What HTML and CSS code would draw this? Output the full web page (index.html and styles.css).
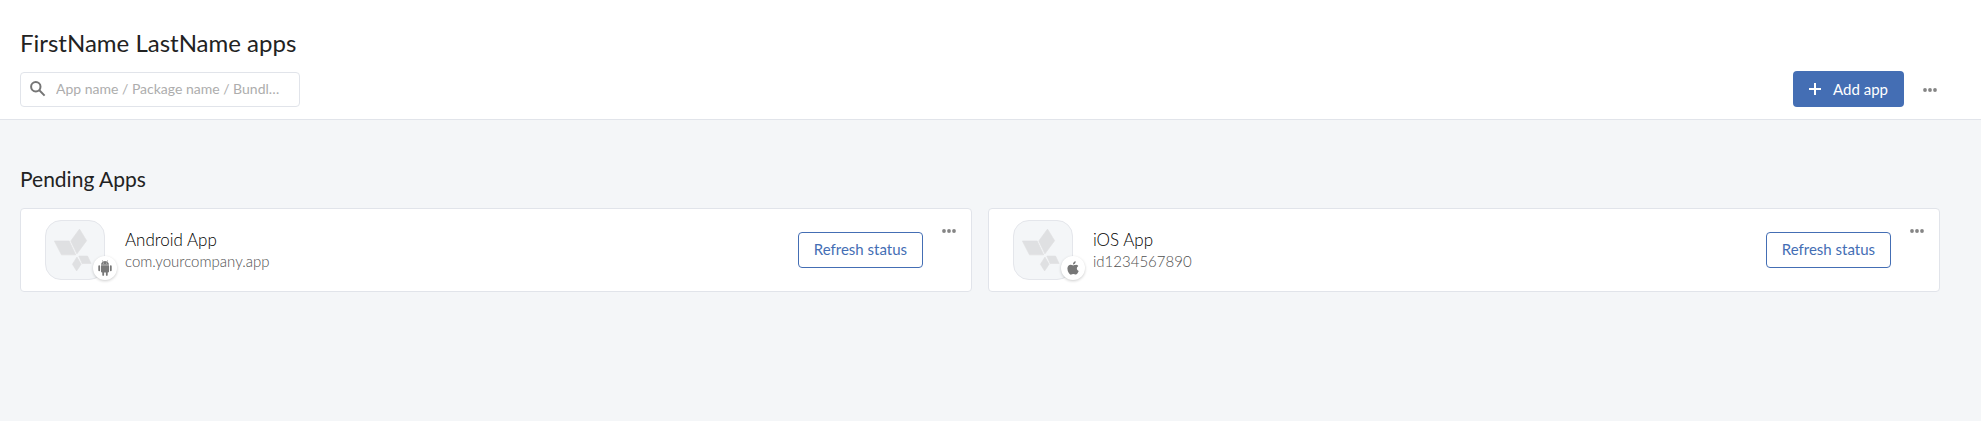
FILE: index.html
```html
<!DOCTYPE html>
<html lang="en">
<head>
<meta charset="utf-8">
<title>Apps</title>
<link rel="stylesheet" href="styles.css">
</head>
<body>
<svg class="sprite" aria-hidden="true">
  <symbol id="dots" viewBox="0 0 14 4"><circle cx="2" cy="2" r="1.9"/><circle cx="7" cy="2" r="1.9"/><circle cx="12" cy="2" r="1.9"/></symbol>
  <symbol id="petals" viewBox="0 0 180 180">
    <path d="M104 25 126 61 96 102 77 62ZM26 62 72 62 92 105 48 105ZM102 109 129 109 140 132 112 132ZM96 112 109 134 95 155 82 134Z"/>
  </symbol>
</svg>
<header class="header">
  <h1 class="title">FirstName LastName apps</h1>
  <div class="toolbar">
    <label class="search">
      <svg class="search-icon" viewBox="0 0 16 16" aria-hidden="true"><circle cx="5.8" cy="5.8" r="4.7"/><path d="M9.3 9.3 14.6 14.6"/></svg>
      <input class="search-input" type="text" aria-label="Search apps" placeholder="App name / Package name / Bundle ID">
    </label>
    <div class="actions">
      <button class="add" type="button">
        <svg class="plus" viewBox="0 0 12 12" aria-hidden="true"><path d="M6 0V12M0 6H12"/></svg>
        Add app
      </button>
      <button class="more" type="button" aria-label="More actions"><svg class="dots"><use href="#dots"/></svg></button>
    </div>
  </div>
</header>
<main class="main">
  <h2 class="section-title">Pending Apps</h2>
  <div class="cards">
    <article class="card">
      <div class="app-icon">
        <svg class="petals" aria-hidden="true"><use href="#petals"/></svg>
        <span class="badge">
          <svg class="android" viewBox="0 0 14 16" aria-hidden="true"><path d="M3 5.3H11V11.6Q11 12.4 10.2 12.4H9.7V14.9Q9.7 15.8 8.8 15.8T7.9 14.9V12.4H6.1V14.9Q6.1 15.8 5.2 15.8T4.3 14.9V12.4H3.8Q3 12.4 3 11.6ZM.3 6.2Q.3 5.3 1.2 5.3T2.1 6.2V10.3Q2.1 11.2 1.2 11.2T.3 10.3ZM11.9 6.2Q11.9 5.3 12.8 5.3T13.7 6.2V10.3Q13.7 11.2 12.8 11.2T11.9 10.3ZM3 4.7Q3 2.8 4.8 1.7L3.9.5 4.3.2 5.3 1.4Q7 .8 8.7 1.4L9.7.2 10.1.5 9.2 1.7Q11 2.8 11 4.7ZM5 2.8V3.5H5.7V2.8ZM8.3 2.8V3.5H9V2.8Z" fill-rule="evenodd"/></svg>
        </span>
      </div>
      <div class="info">
        <h3 class="name">Android App</h3>
        <p class="ident">com.yourcompany.app</p>
      </div>
      <button class="refresh" type="button">Refresh status</button>
      <button class="more card-more" type="button" aria-label="Android App actions"><svg class="dots"><use href="#dots"/></svg></button>
    </article>
    <article class="card">
      <div class="app-icon">
        <svg class="petals" aria-hidden="true"><use href="#petals"/></svg>
        <span class="badge">
          <svg class="apple" viewBox="0 0 12 14" aria-hidden="true"><path d="M8.7.2Q8.8 1.6 8 2.5T6 3.4Q5.9 2.2 6.7 1.3T8.7.2ZM11.3 4.9Q9.7 5.9 9.8 7.5 9.9 9.3 11.7 10.1 11.2 11.4 10.4 12.5 9.6 13.6 8.8 13.6 8.2 13.6 7.6 13.3T6.3 13Q5.6 13 5 13.3T3.9 13.7Q2.9 13.7 1.8 12 .4 9.9.4 7.6.4 5.7 1.4 4.7 2.3 3.8 3.6 3.8 4.3 3.8 5 4.1T6.2 4.4Q6.7 4.4 7.5 4.1T9 3.7Q10.5 3.8 11.3 4.9Z"/></svg>
        </span>
      </div>
      <div class="info">
        <h3 class="name">iOS App</h3>
        <p class="ident">id1234567890</p>
      </div>
      <button class="refresh" type="button">Refresh status</button>
      <button class="more card-more" type="button" aria-label="iOS App actions"><svg class="dots"><use href="#dots"/></svg></button>
    </article>
  </div>
</main>
</body>
</html>
```
FILE: styles.css
```css
* { box-sizing: border-box; }
body {
  margin: 0;
  min-height: 100vh;
  background: #f4f6f8;
  color: #222;
  font-family: Lato, "Open Sans", sans-serif;
}
h1, h2, h3, p { margin: 0; font-weight: 400; }
button { font-family: inherit; cursor: pointer; }
.sprite { position: absolute; width: 0; height: 0; }
.header {
  padding: 28px 41px 12px 20px;
  background: #fff;
  border-bottom: 1px solid #e1e4ea;
}
.title { font-size: 24px; line-height: 30px; }
.toolbar {
  display: flex;
  align-items: center;
  justify-content: space-between;
  margin-top: 13px;
}
.search {
  display: flex;
  align-items: center;
  gap: 10px;
  width: 280px;
  height: 35px;
  padding: 0 14px 0 9px;
  background: #fff;
  border: 1px solid #e1e4ea;
  border-radius: 4px;
}
.search-icon {
  flex: none;
  width: 16px;
  height: 16px;
  fill: none;
  stroke: #757575;
  stroke-width: 2;
}
.search-input {
  flex: 1;
  min-width: 0;
  padding: 0;
  border: 0;
  outline: 0;
  background: none;
  color: #222;
  font: 14px/20px Lato, "Open Sans", sans-serif;
  text-overflow: ellipsis;
}
.search-input::placeholder { color: #adadad; opacity: 1; }
.actions { display: flex; align-items: center; gap: 16px; }
.add {
  display: flex;
  align-items: center;
  gap: 12px;
  height: 36px;
  padding: 0 16px 1px;
  border: 0;
  border-radius: 4px;
  background: #446eb4;
  color: #fff;
  font-size: 15px;
  line-height: 20px;
}
.plus { width: 12px; height: 12px; fill: none; stroke: #fff; stroke-width: 2; }
.more {
  display: flex;
  padding: 9px 3px 8px;
  border: 0;
  background: none;
}
.dots { width: 14px; height: 4px; fill: #858585; }
.main { padding: 47px 41px 48px 20px; }
.section-title { font-size: 21px; line-height: 24px; }
.cards {
  display: grid;
  grid-template-columns: 1fr 1fr;
  gap: 16px;
  margin-top: 17px;
}
.card {
  display: flex;
  align-items: center;
  padding: 11px 12px 11px 24px;
  background: #fff;
  border: 1px solid #e1e4ea;
  border-radius: 4px;
}
.app-icon {
  position: relative;
  width: 60px;
  height: 60px;
  border: 1px solid #e4e6eb;
  border-radius: 16px;
  background: #f4f6f8;
}
.petals {
  display: block;
  width: 100%;
  height: 100%;
  fill: #dfe0e2;
  stroke: #dfe0e2;
  stroke-width: 2;
  stroke-linejoin: round;
}
.badge {
  position: absolute;
  right: -13px;
  bottom: -1px;
  display: flex;
  align-items: center;
  justify-content: center;
  width: 24px;
  height: 24px;
  border-radius: 50%;
  background: #fff;
  box-shadow: 0 1px 3px rgba(0, 0, 0, 0.2);
}
.android { width: 14px; height: 16px; fill: #777; }
.apple { width: 12px; height: 14px; fill: #777; }
.info { flex: 1; margin-left: 20px; }
.name { font-size: 17px; font-weight: 300; line-height: 22px; color: #000; }
.ident { font-size: 15px; font-weight: 300; line-height: 20px; color: #505050; }
.refresh {
  height: 36px;
  padding: 0 15px 2px;
  border: 1px solid #446eb4;
  border-radius: 4px;
  background: #fff;
  color: #446eb4;
  font-size: 15px;
  line-height: 20px;
}
.card-more { align-self: flex-start; margin-left: 16px; }
```
